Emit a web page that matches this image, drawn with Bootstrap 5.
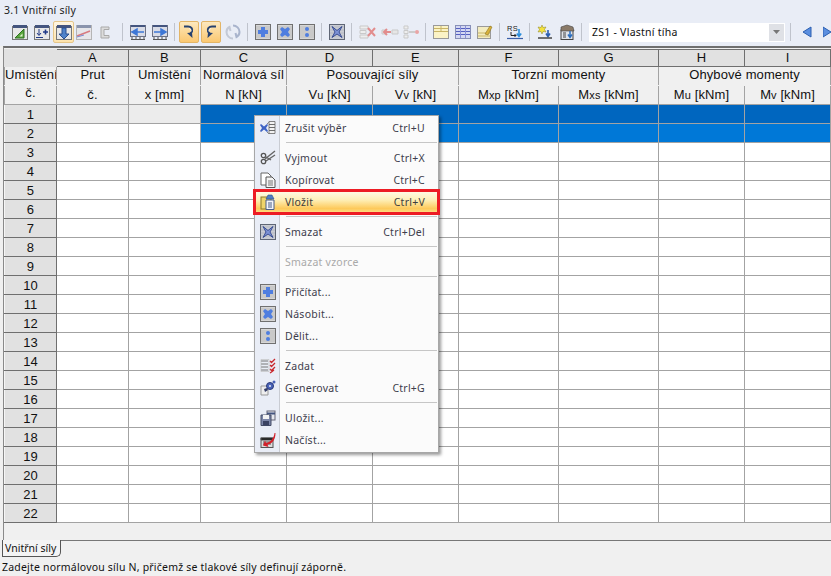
<!DOCTYPE html>
<html lang="cs">
<head>
<meta charset="UTF-8">
<title>Vnitřní síly</title>
<link href="https://cdn.jsdelivr.net/npm/bootstrap@5.3.3/dist/css/bootstrap.min.css" rel="stylesheet">
<style>
html,body{height:576px;overflow:hidden}
body{background:#f0f0f0;font-family:"Liberation Sans",Arial,sans-serif;font-size:13px;color:#111}
.ui{font-family:"Noto Sans","Open Sans",sans-serif;font-size:10.5px;letter-spacing:.25px}
.top{background:#e9edf6;height:46px}
.title{height:18px;padding:3px 0 0 4px;color:#222;line-height:14px;letter-spacing:.2px}
.bar{height:28px;padding-left:12px}
.tb{width:16px;height:16px;flex:none;margin-right:6px;display:block}
.tg{width:18px;margin-right:4px}
.on{width:20px;height:22px;flex:none;margin-right:2px;border:1px solid #e3b566;border-radius:2px;background:linear-gradient(#fde8bd,#fbc871);display:flex;align-items:center;justify-content:center}
.hot{width:21px;height:22px;flex:none;margin:0 2px 0 -3px;border:1px solid #e5c68a;border-radius:2px;background:linear-gradient(#fff6e3,#fde3ac);display:flex;align-items:center;justify-content:center}
.sep{width:1px;height:18px;flex:none;background:#bfc3cc;margin:0 7px 0 0}
.combo{width:196px;height:19px;flex:none;background:#fff;margin-right:5px;padding-left:3px;line-height:19px;color:#111}
.drop{width:15px;height:17px;background:#dfe1e6;margin:1px;display:flex;align-items:center;justify-content:center}
.wrap{height:494px;border-top:2px solid #6f6f6f;border-left:1px solid #8a8a8a;margin-left:3px;padding-top:1px;background:#f0f0f0}
.grid{table-layout:fixed;width:826px;border-collapse:collapse;margin:0;border-color:#a3a3a3;letter-spacing:.1px}
.grid td,.grid th{padding:0;height:19px;border:1px solid #a3a3a3;text-align:center;vertical-align:middle;font-weight:400;line-height:15px;white-space:nowrap;overflow:hidden;background:#fff;color:#111;box-shadow:none}
.grid .let{height:17px;background:#e1e1e1;border-color:#6f6f6f #6f6f6f #6f6f6f #f6f6f6;vertical-align:top}
.grid .cap{background:#f0f0f0;border-bottom-color:#f0f0f0;vertical-align:top}
.grid .cap2{background:#f0f0f0;border-top-color:#f0f0f0;vertical-align:top;padding-top:1px}
.grid .up{line-height:11px}
.grid .corner{background:#e1e1e1;border-color:#e1e1e1}
.grid .rh{background:#e1e1e1;border:1px solid #6f6f6f;border-left-color:#f6f6f6;border-top-color:#f6f6f6}
.grid .ro{background:#ececec}
.grid .b1{background:#0066bf}
.grid .b2{background:#0078d7}
.sub{font-size:11px}
.tabs{height:17px;position:relative}
.tab{width:59px;height:17px;background:#f4f4f4;border:1px solid #555;border-top:0;border-radius:0 0 5px 0;margin-left:2px;padding:1px 0 0 2px;line-height:15px;letter-spacing:0;color:#111}
.rest{height:1px;background:#777}
.status{height:19px;padding:3px 0 0 2px;line-height:15px;font-size:10.5px;letter-spacing:.2px;color:#111}
.cmenu{position:absolute;left:254px;top:115px;width:185px;height:338px;background:#fbfbfb;border:1px solid #a7a7a7;box-shadow:2px 2px 3px rgba(0,0,0,.4);padding:1px 0}
.cmenu::before{content:"";position:absolute;left:0;top:0;bottom:0;width:25px;background:#e9edf6;border-right:1px solid #c9ccd3}
.it{height:22px;position:relative;padding:0 13px 0 30px;color:#3d3d4c;line-height:22px}
.it svg{position:absolute;left:5px;top:3px;width:16px;height:16px}
.it.off{color:#a9a9a9}
.it.sel{background:linear-gradient(#fffbe8,#fef0b8 40%,#fdc95a 80%,#fde08c);outline:3px solid #ed1c24;outline-offset:-1px;z-index:1;color:#3d3d3d}
.ln{height:8px;padding:3px 1px 0 31px}
.ln i{display:block;height:1px;background:#c6c6c6}
</style>
</head>
<body class="position-relative">

<svg width="0" height="0" class="position-absolute">
  <symbol id="hdr" viewBox="0 0 16 16"><rect x=".5" y="2.500" width="15" height="13" fill="#e8e8e8" stroke="#777"/><rect x="1" y="1" width="14" height="3" fill="#44557f"/></symbol>
  <symbol id="i-tri" viewBox="0 0 16 16"><use href="#hdr"/><path d="M3 14 12 5v9z" fill="#5aa83c" stroke="#2f6f22"/><path d="M7.500 12.500 10.500 9.500v3z" fill="#dff0d0"/></symbol>
  <symbol id="i-ins" viewBox="0 0 16 16"><use href="#hdr"/><path d="M5 5v6M3 9l2 2.500L7 9M2 13.500h7" stroke="#223a88" fill="none"/><path d="M9 8h5M11.500 5.500v5" stroke="#223a88" stroke-width="1.600"/></symbol>
  <symbol id="i-down" viewBox="0 0 16 16"><use href="#hdr"/><path d="M6 4h4v6h3l-5 5-5-5h3z" fill="#4f82c9" stroke="#2a4f8f"/></symbol>
  <symbol id="i-line" viewBox="0 0 16 16"><rect x=".5" y="1.500" width="15" height="14" fill="#e6e6ea" stroke="#b5b5b5"/><rect x="1" y="1" width="14" height="3" fill="#8a94ad"/><path d="M1 12 14 7" stroke="#d77a80" stroke-width="1.500"/><path d="M1 13 8 11" stroke="#7a8ad0"/></symbol>
  <symbol id="i-brk" viewBox="0 0 16 16"><path d="M11 3H3v11h8v-2.500H6V5.500h5z" fill="#dcdcdc" stroke="#a9a9a9"/></symbol>
  <symbol id="i-l" viewBox="0 0 16 16"><rect x=".5" y="1.500" width="15" height="11" fill="#d9dce6" stroke="#6c7286"/><rect x="1" y="1" width="14" height="2" fill="#44557f"/><path d="M1 8h6V5l-5 3 5 3V8h7" fill="#3f78d6" stroke="#3f78d6" stroke-width="1.500"/><path d="M2 13v2.500M6 13v2.500M10 13v2.500M14 13v2.500M1 15.500h14" stroke="#555"/></symbol>
  <symbol id="i-r" viewBox="0 0 16 16"><rect x=".5" y="1.500" width="15" height="11" fill="#d9dce6" stroke="#6c7286"/><rect x="1" y="1" width="14" height="2" fill="#44557f"/><path d="M2 8h7V5l5 3-5 3V8" fill="#3f78d6" stroke="#3f78d6" stroke-width="1.500"/><path d="M2 13v2.500M6 13v2.500M10 13v2.500M14 13v2.500M1 15.500h14" stroke="#555"/></symbol>
  <symbol id="i-u1" viewBox="0 0 16 16"><path d="M3 2.500h4c3 0 5 2 4 5L9 10" fill="none" stroke="#27426f" stroke-width="2"/><path d="M6 9l5-.5.500 5.500z" fill="#27426f"/><path d="M8 4.500c2 .5 2.500 2 2 3" stroke="#fff" fill="none" stroke-width=".7"/></symbol>
  <symbol id="i-u2" viewBox="0 0 16 16"><path d="M13 2.500H9c-3 0-5 2-4 5L7 10" fill="none" stroke="#27426f" stroke-width="2"/><path d="M10 9l-5-.5L4.500 14z" fill="#27426f"/><path d="M8 4.500c-2 .5-2.500 2-2 3" stroke="#fff" fill="none" stroke-width=".7"/></symbol>
  <symbol id="i-rot" viewBox="0 0 16 16"><path d="M8 1.500A6.500 6.500 0 0 1 14.500 8c0 2-1 4-3 5l-1-4" fill="none" stroke="#a9b4cc" stroke-width="2"/><path d="M8 14.500A6.500 6.500 0 0 1 1.500 8c0-2 1-4 3-5l1 4" fill="none" stroke="#c3c9d6" stroke-width="2"/></symbol>
  <symbol id="box" viewBox="0 0 16 16"><rect x=".5" y=".5" width="15" height="15" fill="#d6d6d6" stroke="#707070"/><path d="M1 3h14M1 5h14M1 7h14M1 9h14M1 11h14M1 13h14" stroke="#bcbcbc"/></symbol>
  <symbol id="i-plus" viewBox="0 0 16 16"><use href="#box"/><path d="M6 3h4v3h3v4h-3v3H6v-3H3V6h3z" fill="#4f7ee0"/></symbol>
  <symbol id="i-mul" viewBox="0 0 16 16"><use href="#box"/><path d="M5 3l3 2 3-2 2 2-2 3 2 3-2 2-3-2-3 2-2-2 2-3-2-3z" fill="#4f7ee0"/></symbol>
  <symbol id="i-div" viewBox="0 0 16 16"><use href="#box"/><circle cx="8" cy="5" r="2" fill="#4f7ee0"/><circle cx="8" cy="11" r="2" fill="#4f7ee0"/></symbol>
  <symbol id="i-x" viewBox="0 0 16 16"><rect x=".5" y=".5" width="15" height="15" fill="#c9ccd4" stroke="#5f6675"/><path d="M1 3h14M1 6h14M1 9h14M1 12h14" stroke="#b5b8c2"/><path d="M3 2.500 8 6.500 13 2.500 10 8 13 13.500 8 10 3 13.500 6 8z" fill="#7d92d6" stroke="#3b4f94"/></symbol>
  <symbol id="i-gx" viewBox="0 0 18 16"><path d="M1 2h8v3H1zM1 6.500h6v3H1zM1 11h8v3H1z" fill="#eee" stroke="#c9c9c9"/><path d="M9 4l7 8M16 4l-7 8" stroke="#e28d8d" stroke-width="2"/></symbol>
  <symbol id="i-gl" viewBox="0 0 18 16"><path d="M11 6h6v4h-6zM1 6h4v4H1z" fill="#e6e6e6" stroke="#c9c9c9"/><path d="M3 8h7M6 5 3 8l3 3" stroke="#e28d8d" stroke-width="2" fill="none"/></symbol>
  <symbol id="i-gr" viewBox="0 0 18 16"><path d="M1 2h4v3H1zM1 6.500h4v3H1zM1 11h4v3H1z" fill="#eee" stroke="#c9c9c9"/><path d="M6 8h6" stroke="#ccc" stroke-width="2"/><circle cx="14" cy="8" r="2" fill="#e9a5a5"/></symbol>
  <symbol id="i-t1" viewBox="0 0 16 16"><rect x=".5" y="1.500" width="15" height="13" fill="#fbf3c6" stroke="#9a9a9a"/><path d="M1 4.500h14M1 7.500h14M8 2v5" stroke="#c9b566"/></symbol>
  <symbol id="i-t2" viewBox="0 0 16 16"><rect x=".5" y="1.500" width="15" height="13" fill="#d4d8f2" stroke="#8890b8"/><path d="M1 4.500h14M1 7.500h14M1 10.500h14" stroke="#5560c0"/><path d="M5.500 2v12M10.500 2v12" stroke="#8890d8"/></symbol>
  <symbol id="i-t3" viewBox="0 0 16 16"><rect x=".5" y="2.500" width="13" height="12" fill="#f3ecc0" stroke="#9a9a9a"/><path d="M1 9h12M1 12h12" stroke="#c9b566"/><path d="M8 10 13 2l2 1-4 8z" fill="#d9b23b" stroke="#8c7420" stroke-width=".6"/></symbol>
  <symbol id="i-star" viewBox="0 0 16 16"><path d="M5 1l1 2.500L9 3 7.500 5.500 9 8 6 7.500 5 10 4 7.500 1 8l1.500-2.500L1 3l3 .5z" fill="#f4e23c" stroke="#8c8420" stroke-width=".5"/><path d="M11 6v6M9 9.500 11 12.500l2-3" stroke="#2c5fb0" stroke-width="1.600" fill="none"/><path d="M1 14h14" stroke="#444" stroke-width="1.500"/></symbol>
  <symbol id="i-db" viewBox="0 0 16 16"><rect x="2" y="6" width="12" height="9.500" fill="#dfe3ea" stroke="#444"/><path d="M2 3 8 1l6 2 1 4H2z" fill="#8a7a68" stroke="#444" stroke-width=".6"/><path d="M4 9h3M4 11h3M4 13h3" stroke="#444"/><path d="M11 7v6M9 10.500 11 13.500l2-3" stroke="#2c6fc0" stroke-width="1.500" fill="none"/></symbol>
  <symbol id="m-undo" viewBox="0 0 16 16"><path d="M9 1.500h6v3H9zM9 4.500h6v3H9zM9 7.500h6v3H9zM9 10.500h6v3H9z" fill="#f2f2f2" stroke="#666" stroke-width=".8"/><path d="M7 4 9 2M7 12l2 2" stroke="#888"/><path d="M1 4l3 2.500L7 4l1 1-2 3 2 3-1 1-3-2.500L1 12l-1-1 2-3-2-3z" fill="#3e63c4"/></symbol>
  <symbol id="m-cut" viewBox="0 0 16 16"><path d="M15 1 5 9M15 5 6 11" stroke="#666" stroke-width="1.400"/><circle cx="3.500" cy="11.500" r="2.200" fill="none" stroke="#555" stroke-width="1.300"/><circle cx="3.500" cy="5.500" r="2.200" fill="none" stroke="#555" stroke-width="1.300"/><path d="M5 6.500l6 3.500" stroke="#666" stroke-width="1.400"/></symbol>
  <symbol id="m-copy" viewBox="0 0 16 16"><path d="M1 1h7l3 3v9H1z" fill="#fff" stroke="#666"/><path d="M6 5h6l3 3v7.500H6z" fill="#f4f4f4" stroke="#555"/><path d="M8 9h5M8 11h5M8 13h5" stroke="#777"/></symbol>
  <symbol id="m-paste" viewBox="0 0 16 16"><rect x="1" y="3" width="10" height="12" fill="#efd46b" stroke="#8b7a2c"/><path d="M6 6h8v9.500H6z" fill="#f2f4fa" stroke="#4a5e86"/><path d="M8 9h4M8 11h4M8 13h4" stroke="#4a5e86"/><path d="M8 1h4l2 4H6z" fill="#4f7ec4" stroke="#2a4f8f" stroke-width=".6"/></symbol>
  <symbol id="m-zadat" viewBox="0 0 16 16"><path d="M1 3h7M1 6h7M1 9h7M1 12h7" stroke="#777"/><path d="M1 1.500h8v12H1z" fill="none" stroke="#bbb" stroke-width=".6"/><path d="M10 3l1.500 1.500L15 1M10 7l1.500 1.500L15 5M10 11l1.500 1.500L15 9M10 15l1.500-1 2.500-2" stroke="#c9282d" stroke-width="1.300" fill="none"/></symbol>
  <symbol id="m-gen" viewBox="0 0 16 16"><path d="M1 6h7v9H1z" fill="#eee" stroke="#999"/><circle cx="10" cy="6" r="3.500" fill="#4a63b8" stroke="#2a3a78"/><circle cx="10" cy="6" r="1" fill="#e9edf6"/><path d="M4 9l3-1 1 2-3 2z" fill="#333c66"/><circle cx="14" cy="2" r="1.500" fill="#4a63b8"/></symbol>
  <symbol id="m-save" viewBox="0 0 16 16"><rect x="7" y="1" width="8" height="9" fill="#e6e8ee" stroke="#667"/><path d="M7 3.500h8" stroke="#44557f" stroke-width="2"/><path d="M1 5h10v10.500H1z" fill="#7c86a8" stroke="#444c66"/><rect x="3" y="5" width="6" height="4" fill="#f4f4f4"/><rect x="3" y="11" width="6" height="4.500" fill="#3a4262"/></symbol>
  <symbol id="m-load" viewBox="0 0 16 16"><rect x="1" y="6" width="12" height="9.500" fill="#dcdcdc" stroke="#555"/><path d="M1 6h12v2H1zM3 10h8M3 12h8" stroke="#555"/><path d="M14.500 1C14 6 11 10 6 11l-1-2.500-2 5 5.500 1.500-1-2.500C12 12 15.500 8 15.500 1z" fill="#d3202a"/></symbol>
</svg>

<div class="top">
  <div class="title ui">3.1 Vnitřní síly</div>
  <div class="bar d-flex align-items-center ui">
    <svg class="tb"><use href="#i-tri"/></svg>
    <svg class="tb"><use href="#i-ins"/></svg>
    <span class="hot"><svg width="16" height="16"><use href="#i-down"/></svg></span>
    <svg class="tb"><use href="#i-line"/></svg>
    <svg class="tb me-2"><use href="#i-brk"/></svg>
    <span class="sep"></span>
    <svg class="tb"><use href="#i-l"/></svg>
    <svg class="tb"><use href="#i-r"/></svg>
    <span class="sep me-1"></span>
    <span class="on"><svg width="16" height="16"><use href="#i-u1"/></svg></span>
    <span class="on me-1"><svg width="16" height="16"><use href="#i-u2"/></svg></span>
    <svg class="tb"><use href="#i-rot"/></svg>
    <span class="sep"></span>
    <svg class="tb"><use href="#i-plus"/></svg>
    <svg class="tb"><use href="#i-mul"/></svg>
    <svg class="tb"><use href="#i-div"/></svg>
    <span class="sep"></span>
    <svg class="tb"><use href="#i-x"/></svg>
    <span class="sep"></span>
    <svg class="tb tg"><use href="#i-gx"/></svg>
    <svg class="tb tg"><use href="#i-gl"/></svg>
    <svg class="tb tg"><use href="#i-gr"/></svg>
    <span class="sep"></span>
    <svg class="tb"><use href="#i-t1"/></svg>
    <svg class="tb"><use href="#i-t2"/></svg>
    <svg class="tb"><use href="#i-t3"/></svg>
    <span class="sep"></span>
    <svg class="tb" viewBox="0 0 16 16"><text x="0" y="6.500" font-family="Liberation Sans,sans-serif" font-size="7.500" fill="#222">RS</text><path d="M4 8v3.500h5M7.500 10 9 11.500 7.500 13" stroke="#222" fill="none"/><path d="M12 5v7M9.800 9.500 12 12.500l2.200-3" stroke="#2c8fdc" stroke-width="1.600" fill="none"/><path d="M0 14.500h16" stroke="#3a5fa8" stroke-width="1.200"/></svg>
    <span class="sep"></span>
    <svg class="tb"><use href="#i-star"/></svg>
    <svg class="tb"><use href="#i-db"/></svg>
    <span class="sep"></span>
    <div class="combo d-flex justify-content-between">ZS1 - Vlastní tíha
      <span class="drop"><svg width="7" height="4"><path d="M0 0h7L3.500 4z" fill="#777"/></svg></span>
    </div>
    <span class="sep"></span>
    <svg class="ms-1" width="10" height="12"><path d="M9 1v10L1 6z" fill="#5b8fe0" stroke="#2c5fb0"/></svg>
    <svg class="ms-auto" width="8" height="12"><path d="M0 1v10l8-5z" fill="#5b8fe0" stroke="#2c5fb0"/></svg>
  </div>
</div>

<div class="wrap">
  <table class="table grid">
    <colgroup>
      <col style="width:52px"><col style="width:72px"><col style="width:72px"><col style="width:86px"><col style="width:86px"><col style="width:86px"><col style="width:100px"><col style="width:100px"><col style="width:86px"><col style="width:86px">
    </colgroup>
    <thead>
      <tr><th class="corner let"></th><th class="let">A</th><th class="let">B</th><th class="let">C</th><th class="let">D</th><th class="let">E</th><th class="let">F</th><th class="let">G</th><th class="let">H</th><th class="let">I</th></tr>
      <tr>
        <th class="cap">Umístění</th><th class="cap">Prut</th><th class="cap">Umístění</th><th class="cap">Normálová síl</th>
        <th class="cap" colspan="2">Posouvající síly</th><th class="cap" colspan="2">Torzní momenty</th><th class="cap" colspan="2">Ohybové momenty</th>
      </tr>
      <tr>
        <th class="cap2 up">č.</th><th class="cap2">č.</th><th class="cap2">x [mm]</th><th class="cap2">N [kN]</th>
        <th class="cap2">V<span class="sub">u</span> [kN]</th><th class="cap2">V<span class="sub">v</span> [kN]</th>
        <th class="cap2">M<span class="sub">xp</span> [kNm]</th><th class="cap2">M<span class="sub">xs</span> [kNm]</th>
        <th class="cap2">M<span class="sub">u</span> [kNm]</th><th class="cap2">M<span class="sub">v</span> [kNm]</th>
      </tr>
    </thead>
    <tbody id="rows"></tbody>
  </table>
</div>

<div class="cmenu ui">
  <div class="it d-flex justify-content-between"><svg><use href="#m-undo"/></svg><span>Zrušit výběr</span><span>Ctrl+U</span></div>
  <div class="ln"><i></i></div>
  <div class="it d-flex justify-content-between"><svg><use href="#m-cut"/></svg><span>Vyjmout</span><span>Ctrl+X</span></div>
  <div class="it d-flex justify-content-between"><svg><use href="#m-copy"/></svg><span>Kopírovat</span><span>Ctrl+C</span></div>
  <div class="it sel d-flex justify-content-between"><svg><use href="#m-paste"/></svg><span>Vložit</span><span>Ctrl+V</span></div>
  <div class="ln"><i></i></div>
  <div class="it d-flex justify-content-between"><svg><use href="#i-x"/></svg><span>Smazat</span><span>Ctrl+Del</span></div>
  <div class="ln"><i></i></div>
  <div class="it off"><span>Smazat vzorce</span></div>
  <div class="ln"><i></i></div>
  <div class="it"><svg><use href="#i-plus"/></svg><span>Přičítat...</span></div>
  <div class="it"><svg><use href="#i-mul"/></svg><span>Násobit...</span></div>
  <div class="it"><svg><use href="#i-div"/></svg><span>Dělit...</span></div>
  <div class="ln"><i></i></div>
  <div class="it"><svg><use href="#m-zadat"/></svg><span>Zadat</span></div>
  <div class="it d-flex justify-content-between"><svg><use href="#m-gen"/></svg><span>Generovat</span><span>Ctrl+G</span></div>
  <div class="ln"><i></i></div>
  <div class="it"><svg><use href="#m-save"/></svg><span>Uložit...</span></div>
  <div class="it"><svg><use href="#m-load"/></svg><span>Načíst...</span></div>
</div>

<div class="tabs d-flex ui">
  <div class="tab flex-shrink-0">Vnitřní síly</div>
  <div class="rest flex-grow-1"></div>
</div>
<div class="status ui">Zadejte normálovou sílu N, přičemž se tlakové síly definují záporně.</div>

<script>
  const rows = document.getElementById("rows")
  let html = ""
  for (let r = 1; r <= 22; r++) {
    const blue = r == 1 ? "b1" : r == 2 ? "b2" : ""
    html += `<tr><td class="rh">${r}</td>`
    for (let c = 0; c < 9; c++) {
      let cls = c < 2 ? (r == 1 ? "ro" : "") : blue
      html += `<td class="${cls}"></td>`
    }
    html += "</tr>"
  }
  rows.innerHTML = html
</script>
<script src="https://cdn.jsdelivr.net/npm/bootstrap@5.3.3/dist/js/bootstrap.bundle.min.js"></script>
</body>
</html>
